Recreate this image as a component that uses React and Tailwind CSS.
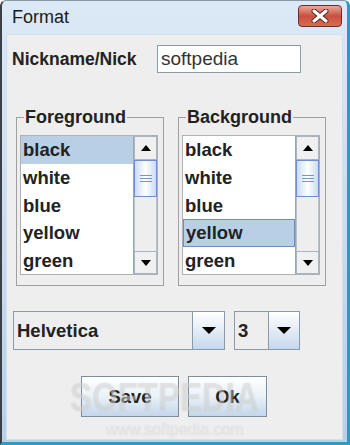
const colors = ["black", "white", "blue", "yellow", "green"];

function Arrow({ up, size = "sm" }) {
  const cls =
    size === "sm"
      ? up
        ? "border-l-[5px] border-r-[5px] border-b-[6px] border-l-transparent border-r-transparent border-b-black"
        : "border-l-[5px] border-r-[5px] border-t-[6px] border-l-transparent border-r-transparent border-t-black"
      : "border-l-[7px] border-r-[7px] border-t-[7px] border-l-transparent border-r-transparent border-t-black";
  return <div className={`w-0 h-0 ${cls}`} />;
}

function ScrollBar() {
  return (
    <div className="w-[24px] h-full flex flex-col border-l border-[#9aa8b5] bg-[#eeeeee]">
      <div className="h-[24px] flex items-center justify-center border border-[#a8b4c0] bg-[#f0f0f0]">
        <Arrow up />
      </div>
      <div className="h-[37px] flex flex-col items-center justify-center gap-[2px] border border-[#6f90cf] bg-gradient-to-r from-[#c9dcf2] via-white to-[#c9dcf2]">
        <div className="w-[12px] h-px bg-[#7a96c8]" />
        <div className="w-[12px] h-px bg-[#7a96c8]" />
        <div className="w-[12px] h-px bg-[#7a96c8]" />
      </div>
      <div className="flex-1 border-x border-[#b8c2cc]" />
      <div className="h-[23px] flex items-center justify-center border border-[#a8b4c0] bg-[#f0f0f0]">
        <Arrow />
      </div>
    </div>
  );
}

function ColorList({ title, selected, boxed }) {
  return (
    <fieldset className="w-[148px] h-[179px] border border-[#a0a0a0] pl-[3px] pr-[5px] pt-[8px] pb-[7px]">
      <legend className="ml-[4px] px-px text-[18px] leading-[20px] font-bold text-[#222]">
        {title}
      </legend>
      <div className="h-[140px] flex bg-white border border-[#b0b0b0]">
        <div className="flex-1 flex flex-col">
          {colors.map((c) => (
            <div
              key={c}
              className={`h-[28px] flex items-center pl-[2px] text-[18.5px] font-bold text-[#222] ${
                c === selected ? "bg-[#b8cfe5]" : ""
              } ${c === selected && boxed ? "border border-[#6d8fc0]" : ""}`}
            >
              {c}
            </div>
          ))}
        </div>
        <ScrollBar />
      </div>
    </fieldset>
  );
}

function Combo({ value, width, textWidth }) {
  return (
    <div className={`${width} h-[39px] flex border border-[#8a9aaa] bg-[#eeeeee]`}>
      <div className={`${textWidth} flex items-center pl-[3px] text-[18.5px] font-bold text-[#222] border-r border-[#8a9aaa]`}>
        {value}
      </div>
      <div className="flex-1 flex items-center justify-center bg-gradient-to-b from-white to-[#c6d8ec]">
        <Arrow size="lg" />
      </div>
    </div>
  );
}

function Button({ label, width }) {
  return (
    <button className={`${width} h-[41px] border border-[#7d8d9c] bg-gradient-to-b from-white via-[#eaf1f8] to-[#c4d6ea] text-[18.5px] font-bold text-[#222]`}>
      {label}
    </button>
  );
}

export default function App() {
  return (
    <div
      className="relative w-[350px] h-[445px] overflow-hidden flex flex-col rounded-t-[6px] border-t border-t-[#8a97a4] border-l-2 border-l-[#3a4048] border-r-[3px] border-r-[#2b9cc0] border-b-[3px] border-b-[#2b9cc0] bg-gradient-to-b from-[#dce9f6] to-[#b8d0ea] px-[4px] pb-[2px]"
      style={{ fontFamily: "'Liberation Sans', Arial, sans-serif" }}
    >
      {/* TITLE BAR */}
      <div className="h-[33px] flex items-center justify-between pl-[6px] pr-[1px]">
        <span className="text-[18px] text-[#1a1a1a]">Format</span>
        <div className="w-[44px] h-[22px] -mt-[3px] flex items-center justify-center rounded-[4px] border border-[#6a2e2a] bg-gradient-to-b from-[#e9a898] via-[#c9503f] to-[#d96a50]">
          <svg width="18" height="14" viewBox="0 0 18 14">
            <path d="M3 2 L15 12 M15 2 L3 12" stroke="#5a2a26" strokeWidth="5" strokeLinecap="round" />
            <path d="M3 2 L15 12 M15 2 L3 12" stroke="white" strokeWidth="3" strokeLinecap="round" />
          </svg>
        </div>
      </div>

      {/* CLIENT */}
      <div className="flex-1 flex flex-col bg-[#eeeeee] border border-[#cfe0f3]">
        {/* NICKNAME */}
        <div className="flex items-center mt-[10px] pl-[5px]">
          <span className="w-[145px] text-[17.5px] font-bold text-[#222]">Nickname/Nick</span>
          <div className="w-[144px] h-[28px] flex items-center pl-[3px] bg-white border border-[#8c9cab] text-[19px] text-[#333]">
            softpedia
          </div>
        </div>

        {/* LISTS */}
        <div className="flex gap-[14px] mt-[34px] pl-[9px]">
          <ColorList title="Foreground" selected="black" />
          <ColorList title="Background" selected="yellow" boxed />
        </div>

        {/* COMBOS */}
        <div className="flex gap-[9px] mt-[25px] pl-[6px]">
          <Combo value="Helvetica" width="w-[212px]" textWidth="w-[179px]" />
          <Combo value="3" width="w-[66px]" textWidth="w-[34px]" />
        </div>

        {/* BUTTONS */}
        <div className="flex gap-[9px] mt-[26px] pl-[74px]">
          <Button label="Save" width="w-[98px]" />
          <Button label="Ok" width="w-[79px]" />
        </div>
      </div>

      {/* WATERMARK */}
      <div className="absolute left-[68px] top-[376px] pointer-events-none text-[33px] leading-[40px] font-bold scale-y-125 text-white/35 [text-shadow:0_0_1px_rgba(120,120,120,0.3)]">
        SOFTPEDIA
      </div>
      <div className="absolute left-[104px] top-[420px] pointer-events-none text-[16px] leading-[18px] text-white/50 [text-shadow:0_0_1px_rgba(120,120,120,0.3)]">
        www.softpedia.com
      </div>
    </div>
  );
}
